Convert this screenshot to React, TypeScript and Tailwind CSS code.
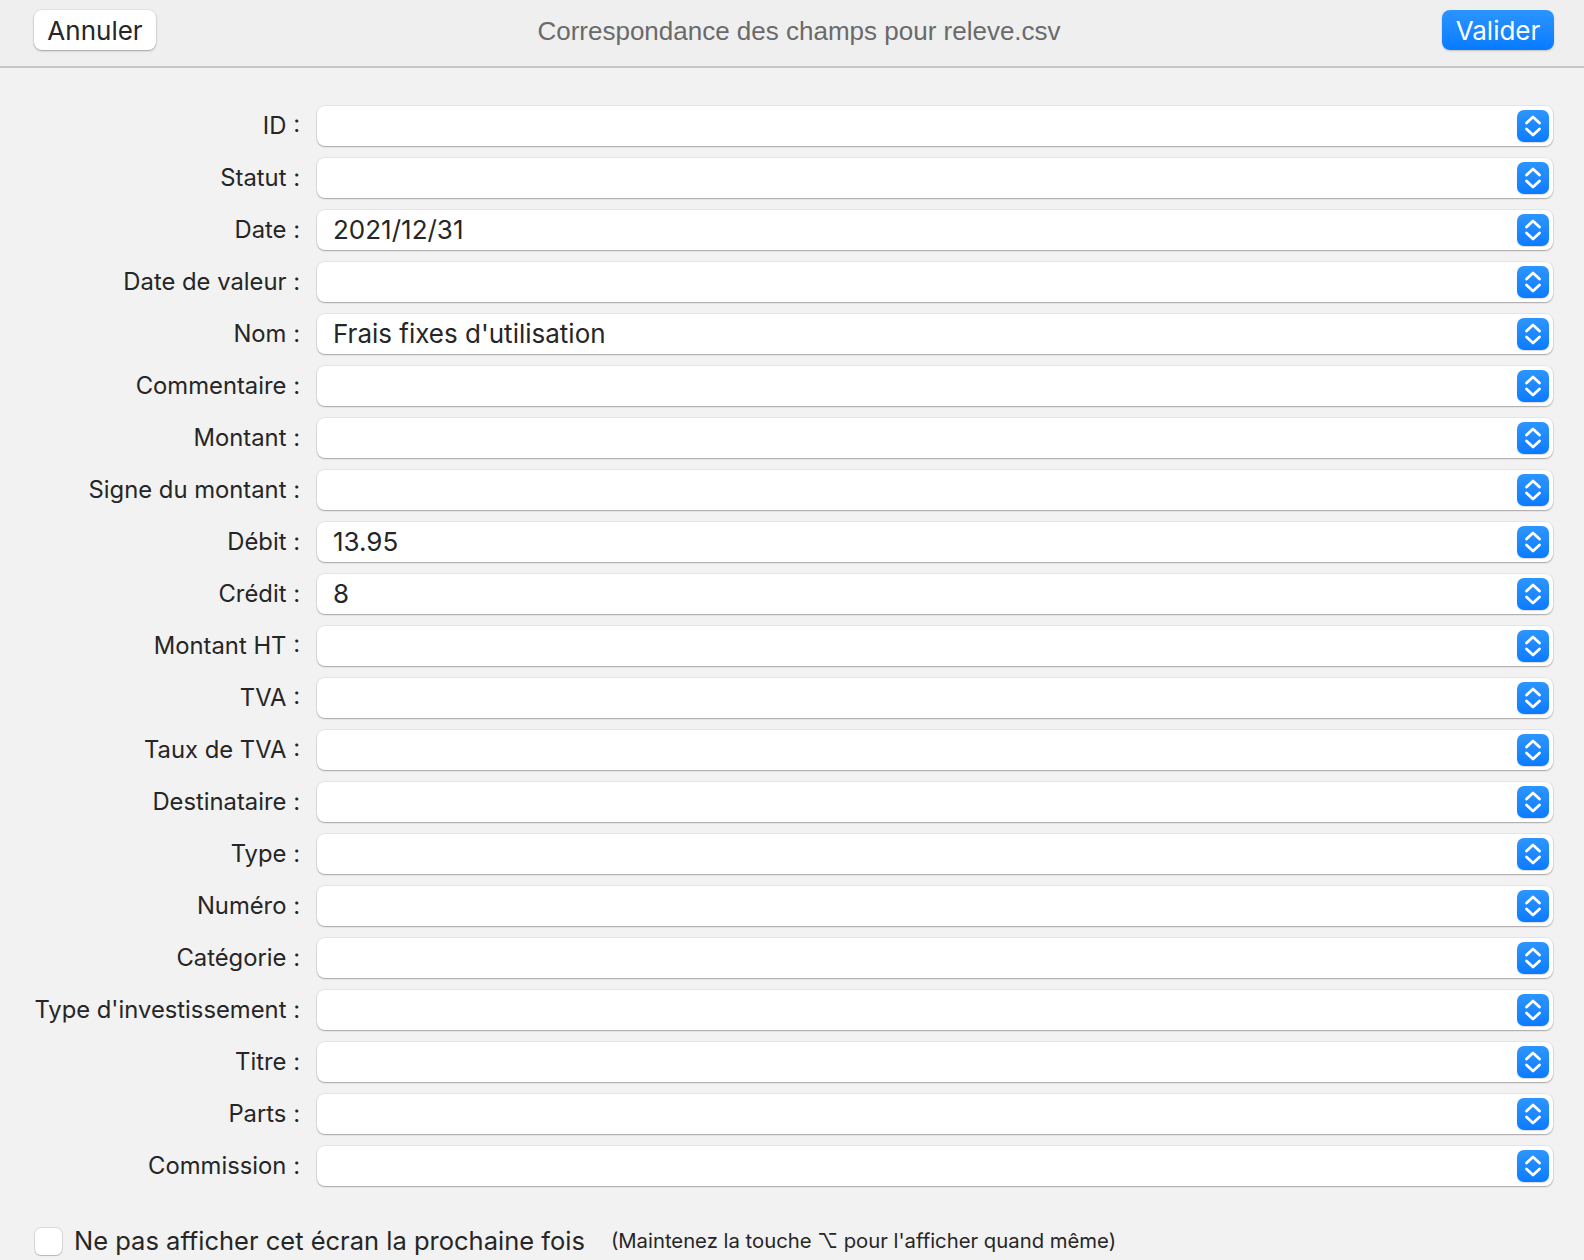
import React from 'react';

type Field = {
    label: string;
    value?: string;
};

const fields: Field[] = [
    { label: 'ID' },
    { label: 'Statut' },
    { label: 'Date', value: '2021/12/31' },
    { label: 'Date de valeur' },
    { label: 'Nom', value: "Frais fixes d'utilisation" },
    { label: 'Commentaire' },
    { label: 'Montant' },
    { label: 'Signe du montant' },
    { label: 'Débit', value: '13.95' },
    { label: 'Crédit', value: '8' },
    { label: 'Montant HT' },
    { label: 'TVA' },
    { label: 'Taux de TVA' },
    { label: 'Destinataire' },
    { label: 'Type' },
    { label: 'Numéro' },
    { label: 'Catégorie' },
    { label: "Type d'investissement" },
    { label: 'Titre' },
    { label: 'Parts' },
    { label: 'Commission' },
];

function Stepper() {
    return (
        <div className="flex h-[32px] w-[32px] items-center justify-center rounded-[7px] bg-gradient-to-b from-[#2d95ff] to-[#0a7bff] shadow-[0_1px_1px_rgba(0,0,0,0.15)]">
            <svg width="18" height="24" viewBox="0 0 18 24" fill="none">
                <path d="M2.5 9 L9 3 L15.5 9" stroke="white" strokeWidth="2.8" strokeLinecap="round" strokeLinejoin="round" />
                <path d="M2.5 15 L9 21 L15.5 15" stroke="white" strokeWidth="2.8" strokeLinecap="round" strokeLinejoin="round" />
            </svg>
        </div>
    );
}

function FieldRow({ label, value }: Field) {
    return (
        <>
            <div className="flex h-[40px] items-center justify-end text-[23.8px] text-[#262626]">{label} :</div>
            <div className="flex h-[40px] items-center justify-between rounded-[8px] bg-white pl-[16px] pr-[4px] shadow-[0_0_0_1px_rgba(0,0,0,0.05),0_1px_1.5px_rgba(0,0,0,0.28)]">
                <span className="-mt-[1px] text-[26px] text-[#262626]">{value}</span>
                <Stepper />
            </div>
        </>
    );
}

export default function App() {
    return (
        <div className="flex h-[1260px] w-[1584px] flex-col overflow-hidden bg-[#f2f2f2] font-['Inter',sans-serif]">
            <div className="flex h-[68px] shrink-0 items-start justify-between border-b-2 border-[#c6c6c6] bg-[#efefef] pl-[34px] pr-[30px] pt-[10px]">
                <button className="h-[40px] w-[122px] rounded-[8px] bg-white text-[26px] text-[#262626] shadow-[0_0_0_1px_rgba(0,0,0,0.04),0_1px_2px_rgba(0,0,0,0.3)]">
                    Annuler
                </button>
                <div className="pt-[2px] font-['Liberation_Sans',sans-serif] text-[26px] text-[#6a6a6a]">
                    Correspondance des champs pour releve.csv
                </div>
                <button className="h-[40px] w-[112px] rounded-[8px] bg-gradient-to-b from-[#2a94ff] to-[#057bff] text-[26px] text-white shadow-[0_1px_2px_rgba(0,0,0,0.2)]">
                    Valider
                </button>
            </div>
            <div className="grid grid-cols-[300px_1fr] gap-x-[17px] gap-y-[12px] pr-[31px] pt-[38px]">
                {fields.map((f) => (
                    <FieldRow key={f.label} label={f.label} value={f.value} />
                ))}
            </div>
            <div className="mt-[36px] flex items-center pl-[35px]">
                <div className="h-[27px] w-[27px] rounded-[6px] bg-white shadow-[0_0_0_1px_rgba(0,0,0,0.1),0_1px_1px_rgba(0,0,0,0.15)]" />
                <span className="ml-[12px] text-[25.5px] text-[#262626]">Ne pas afficher cet écran la prochaine fois</span>
                <span className="ml-[26px] text-[20.3px] text-[#262626]">(Maintenez la touche ⌥ pour l'afficher quand même)</span>
            </div>
        </div>
    );
}
